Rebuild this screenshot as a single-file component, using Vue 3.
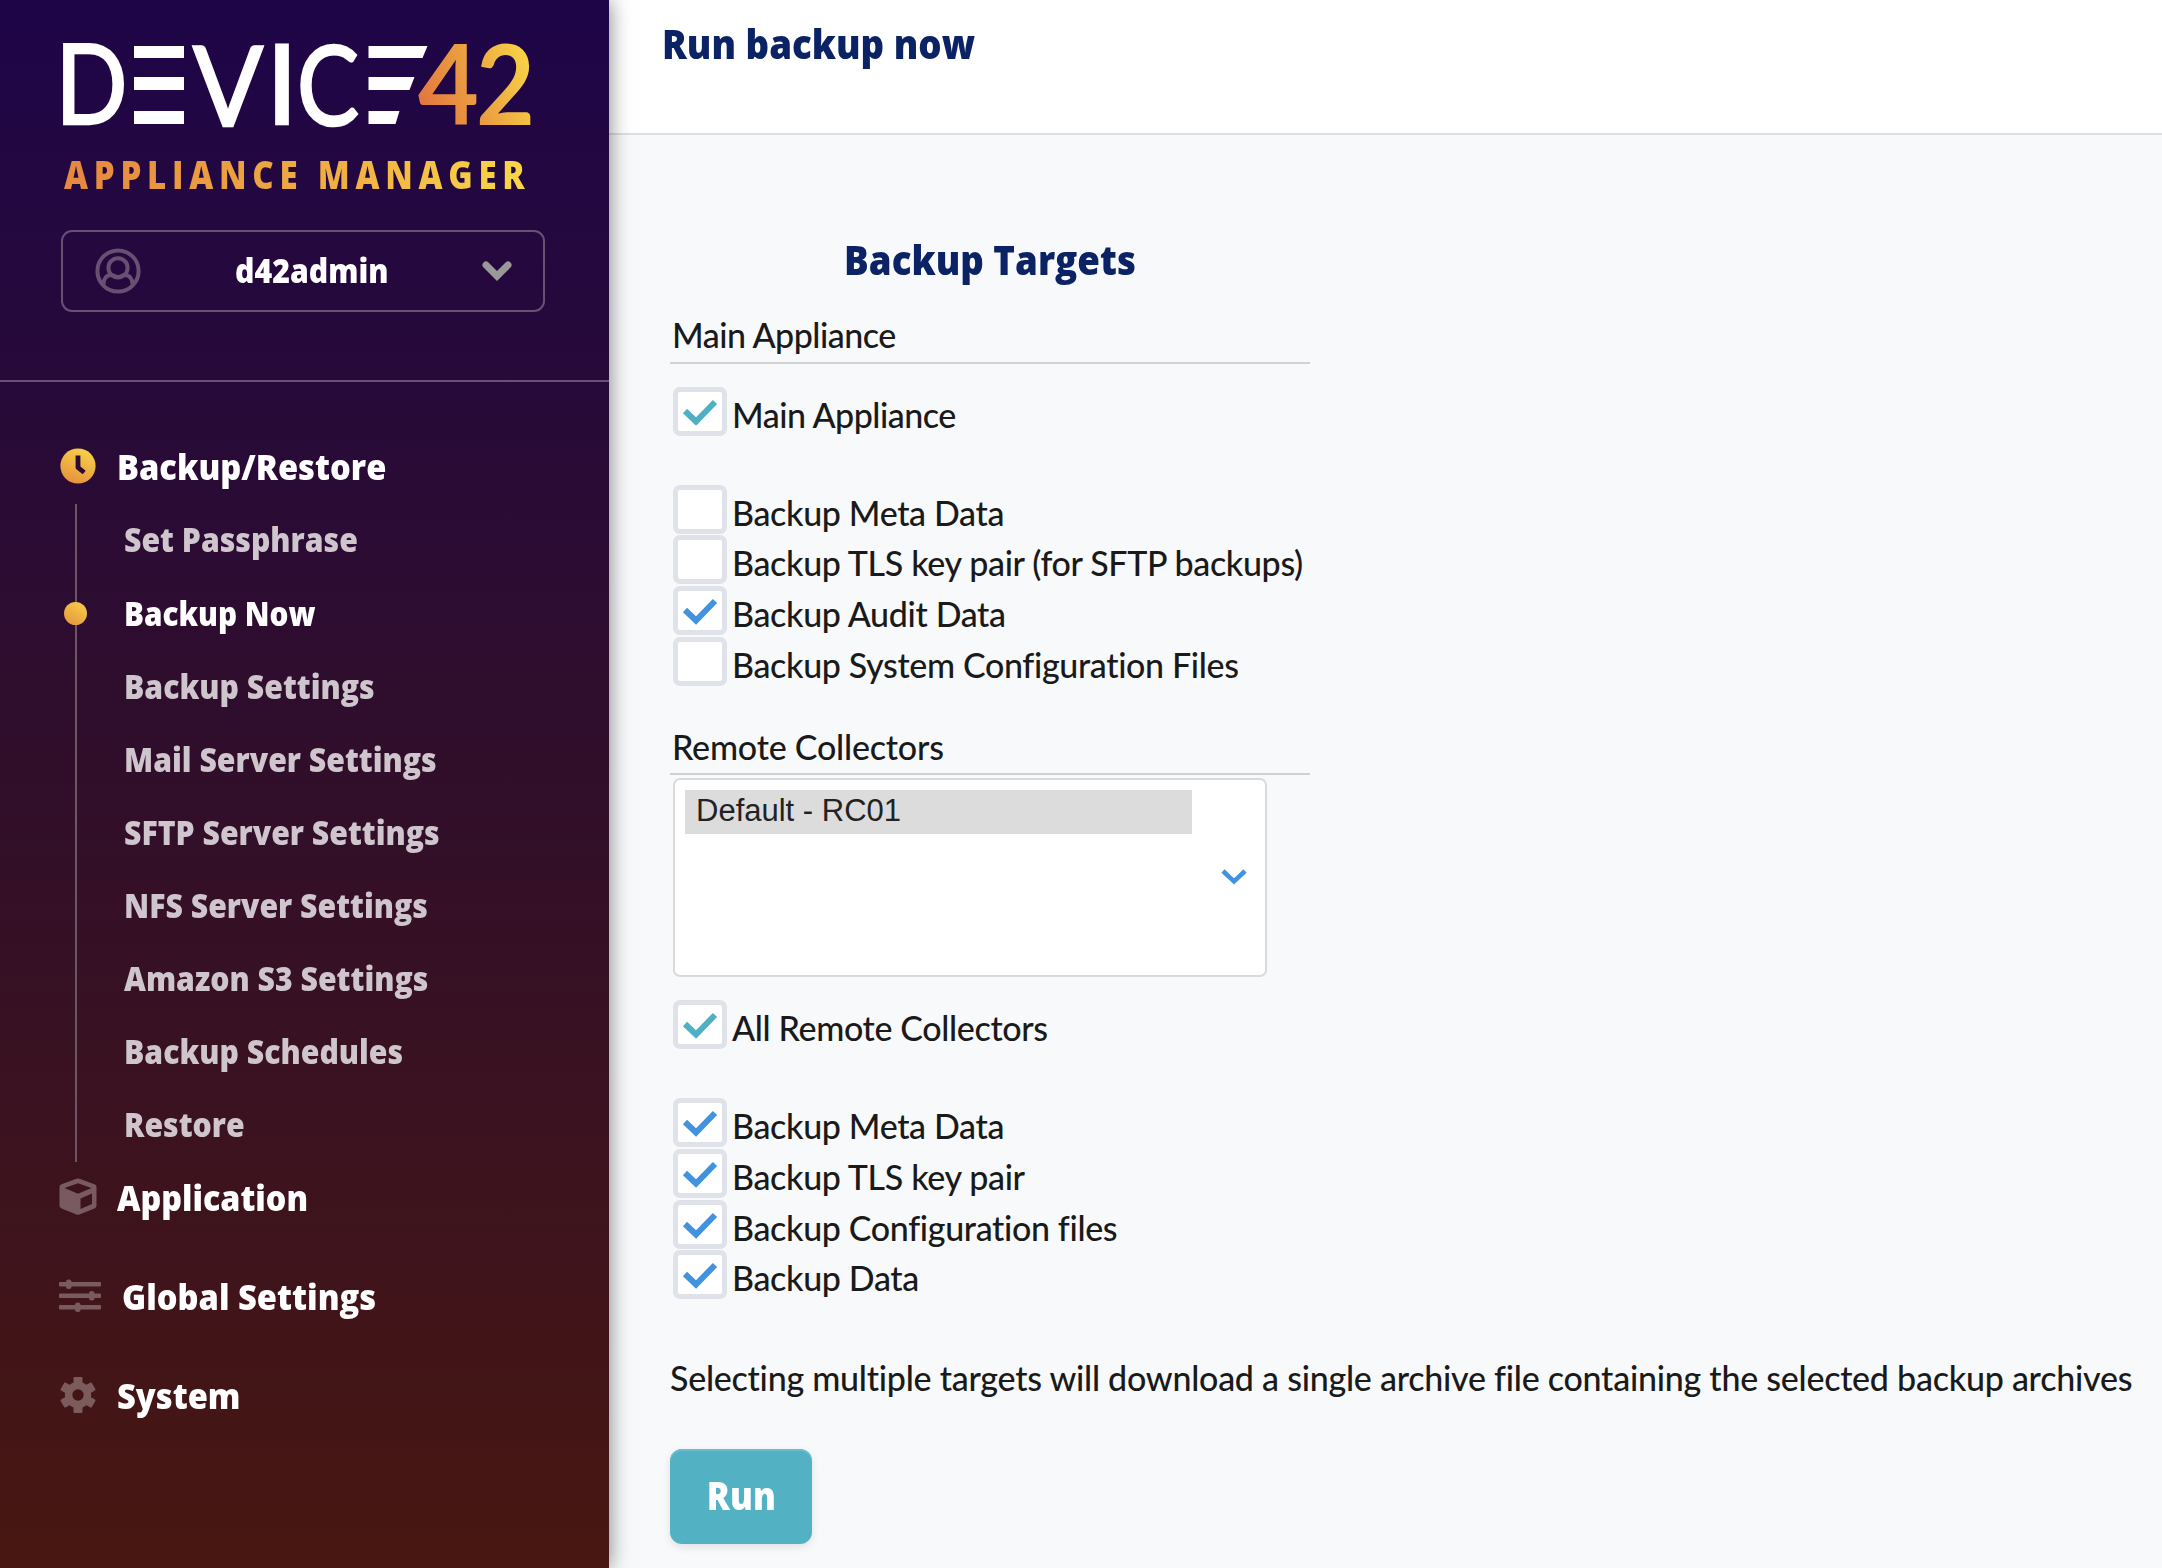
<script setup>
const backupItems = [
  { label: 'Set Passphrase' },
  { label: 'Backup Now', active: true },
  { label: 'Backup Settings' },
  { label: 'Mail Server Settings' },
  { label: 'SFTP Server Settings' },
  { label: 'NFS Server Settings' },
  { label: 'Amazon S3 Settings' },
  { label: 'Backup Schedules' },
  { label: 'Restore' },
]

const mainOptions = [
  { label: 'Backup Meta Data', checked: false },
  { label: 'Backup TLS key pair (for SFTP backups)', checked: false },
  { label: 'Backup Audit Data', checked: true },
  { label: 'Backup System Configuration Files', checked: false },
]

const collectorOptions = [
  { label: 'Backup Meta Data', checked: true },
  { label: 'Backup TLS key pair', checked: true },
  { label: 'Backup Configuration files', checked: true },
  { label: 'Backup Data', checked: true },
]
</script>

<template>
  <div class="page">
    <aside class="sidebar">
      <div class="brand">
        <svg class="logo" width="472" height="90" viewBox="0 0 472 90" aria-label="DEVICE42">
          <defs>
            <linearGradient id="gold" gradientUnits="userSpaceOnUse" x1="358" y1="70" x2="466" y2="30">
              <stop offset="0" stop-color="#e27541" />
              <stop offset="0.5" stop-color="#eb9f40" />
              <stop offset="1" stop-color="#f7d046" />
            </linearGradient>
          </defs>
          <g class="letters" fill="#fff" stroke="#fff">
            <text x="-7.500" y="84" textLength="72" lengthAdjust="spacingAndGlyphs">D</text>
            <text x="130" y="85.500" textLength="70" lengthAdjust="spacingAndGlyphs">V</text>
            <text x="203" y="84" textLength="32" lengthAdjust="spacingAndGlyphs">I</text>
            <text x="234" y="85" textLength="62" lengthAdjust="spacingAndGlyphs">C</text>
          </g>
          <g fill="#fff">
            <rect x="71" y="6" width="50" height="12" />
            <rect x="71" y="37" width="50" height="13" />
            <rect x="71" y="71" width="50" height="13" />
            <path d="M305.500 6h59l-5 12h-54z" />
            <path d="M305.500 37h46l-5 13h-41z" />
            <path d="M305.500 71h31l-4 13h-27z" />
          </g>
          <g class="letters bold" fill="url(#gold)">
            <text x="355" y="85" textLength="61" lengthAdjust="spacingAndGlyphs">4</text>
            <text x="413" y="85" textLength="59" lengthAdjust="spacingAndGlyphs">2</text>
          </g>
        </svg>
        <div class="product">APPLIANCE MANAGER</div>
      </div>

      <div class="user">
        <svg class="avatar" width="46" height="46" viewBox="0 0 46 46" fill="none" stroke="#685072" stroke-width="4">
          <circle cx="23" cy="23" r="20.6" />
          <circle cx="23" cy="19.8" r="9.6" />
          <path d="M8.5 36.5c0-6 3-9.500 8-9.500 2 0 3.500 2 6.500 2s4.500-2 6.500-2c5 0 8 3.500 8 9.500" />
        </svg>
        <div class="user-name"><span>d42admin</span></div>
        <svg class="caret" width="30" height="20" viewBox="0 0 30 20" fill="none" stroke="#999" stroke-width="7" stroke-linecap="round">
          <path d="M4 4l11 11L26 4" />
        </svg>
      </div>

      <nav class="nav">
        <div class="head">
          <svg class="icon" width="36" height="36" viewBox="0 0 36 36">
            <defs>
              <linearGradient id="sun" x1="0.3" y1="1" x2="0.7" y2="0">
                <stop offset="0" stop-color="#e5913f" />
                <stop offset="1" stop-color="#f8d247" />
              </linearGradient>
            </defs>
            <circle cx="18" cy="18" r="17.600" fill="url(#sun)" />
            <path d="M18 7.500v12l6.200 5" fill="none" stroke="#2b0a33" stroke-width="4.800" stroke-linejoin="round" />
          </svg>
          <span>Backup/Restore</span>
        </div>
        <ul class="sub">
          <li v-for="item in backupItems" :key="item.label" :class="{ active: item.active }"><span>{{ item.label }}</span></li>
        </ul>
        <div class="head app">
          <svg class="icon" width="38" height="37" viewBox="0 0 38 37" fill="#795a61" fill-rule="evenodd">
            <path d="M17.500 .8q1.500-.6 3 0l15 5.400q2 .8 2 2.800v18.500q0 2-2 3l-15 6q-1.500 .6-3 0l-15-6q-2-1-2-3V9q0-2 2-2.800zM5.500 10l13.500 5.800L32.500 10 19 5.200zM21.500 20.500v10.500l11.500-5v-10.500z" />
          </svg>
          <span>Application</span>
        </div>
        <div class="head wide">
          <svg class="icon" width="42" height="34" viewBox="0 0 42 34" fill="#795a5e">
            <rect x="0" y="3" width="42" height="4.500" rx="1" />
            <rect x="0" y="14.500" width="42" height="4.500" rx="1" />
            <rect x="0" y="26" width="42" height="4.500" rx="1" />
            <rect x="7" y="0.500" width="5.500" height="9.500" rx="2.500" />
            <rect x="30" y="12" width="5.500" height="9.500" rx="2.500" />
            <rect x="16" y="23.500" width="5.500" height="9.500" rx="2.500" />
          </svg>
          <span>Global Settings</span>
        </div>
        <div class="head">
          <svg class="icon" width="36" height="36" viewBox="0 0 36 36">
            <g fill="#7c5b5c">
              <rect x="13.500" y="0" width="9" height="36" rx="1" />
              <rect x="13.500" y="0" width="9" height="36" rx="1" transform="rotate(60 18 18)" />
              <rect x="13.500" y="0" width="9" height="36" rx="1" transform="rotate(120 18 18)" />
              <circle cx="18" cy="18" r="13.200" />
            </g>
            <circle cx="18" cy="18" r="5.700" fill="#441415" />
          </svg>
          <span>System</span>
        </div>
      </nav>
    </aside>

    <main class="content">
      <header class="topbar"><h1>Run backup now</h1></header>
      <section class="form">
        <h2>Backup Targets</h2>

        <h3>Main Appliance</h3>
        <label class="check lead teal">
          <span class="box"><svg width="54" height="49" viewBox="0 0 54 49"><path d="M12 24l11 10.500L42 15" /></svg></span>
          <span class="text">Main Appliance</span>
        </label>
        <div class="group">
          <label v-for="o in mainOptions" :key="o.label" class="check">
            <span class="box"><svg v-if="o.checked" width="54" height="49" viewBox="0 0 54 49"><path d="M12 24l11 10.500L42 15" /></svg></span>
            <span class="text">{{ o.label }}</span>
          </label>
        </div>

        <h3 class="second">Remote Collectors</h3>
        <div class="select">
          <div class="option">Default - RC01</div>
          <svg width="26" height="18" viewBox="0 0 26 18" fill="none" stroke="#4193e0" stroke-width="4.500"><path d="M2 2l11 10.500L24 2" /></svg>
        </div>
        <label class="check lead all teal">
          <span class="box"><svg width="54" height="49" viewBox="0 0 54 49"><path d="M12 24l11 10.500L42 15" /></svg></span>
          <span class="text">All Remote Collectors</span>
        </label>
        <div class="group">
          <label v-for="o in collectorOptions" :key="o.label" class="check">
            <span class="box"><svg v-if="o.checked" width="54" height="49" viewBox="0 0 54 49"><path d="M12 24l11 10.500L42 15" /></svg></span>
            <span class="text">{{ o.label }}</span>
          </label>
        </div>

        <p class="note">Selecting multiple targets will download a single archive file containing the selected backup archives</p>
        <button class="run"><span>Run</span></button>
      </section>
    </main>
  </div>
</template>

<style>
body { overflow: hidden; }
</style>

<style scoped>
* { box-sizing: border-box; }
.page { display: flex; width: 2162px; height: 1568px; background: #f8f9fb; overflow: hidden; font-family: "Lato", sans-serif; white-space: nowrap; }

.sidebar { position: relative; z-index: 1; flex: none; width: 609px; height: 1568px; background: linear-gradient(#1e0548, #300e2b 48%, #481711); box-shadow: 0 0 20px rgba(0, 0, 0, 0.5); font-family: "Open Sans", sans-serif; font-weight: 800; color: #fff; }
.brand { height: 230px; padding: 40px 0 0 63px; }
.logo { display: block; overflow: visible; }
.letters { font: 400 111px "Lato", sans-serif; stroke-width: 2.500; }
.letters.bold { font-weight: 700; }
.product { width: max-content; margin-top: 18px; margin-left: 1px; font-size: 38px; font-weight: 800; line-height: 52px; letter-spacing: 6.600px; transform: scaleX(0.87); transform-origin: 0 50%; background: linear-gradient(90deg, #e58740, #f0b043 60%, #f9d847); background-clip: text; -webkit-background-clip: text; color: transparent; }

.user { display: flex; align-items: center; width: 484px; height: 82px; margin-left: 61px; padding: 0 31px 0 32px; border: 2px solid #685072; border-radius: 11px; }
.user-name { flex: 1; margin-top: -2px; padding-left: 94px; font-size: 34px; }
.user-name span { display: inline-block; transform: scaleX(0.89); transform-origin: 0 50%; }
.avatar, .caret { flex: none; }

.nav { margin-top: 68px; padding-top: 49px; border-top: 2px solid #685370; }
.head { display: flex; align-items: center; height: 70px; margin-bottom: 29px; padding-left: 60px; font-size: 35.500px; }
.head span { margin-left: 21px; transform: scaleX(0.92); transform-origin: 0 50%; }
.head.app, .head.wide { padding-left: 59px; }
.head.app span { margin-left: 20px; transform: scaleX(0.91); }
.head .icon { flex: none; }
.head:first-child { margin-bottom: 3px; }
.sub { margin: 0 0 0 75px; padding: 0; list-style: none; border-left: 2px solid #6d5566; }
.sub li { position: relative; height: 73.100px; padding-left: 46.500px; font-size: 33px; line-height: 72px; color: #cfc5cd; }
.sub li:nth-child(n + 2):nth-child(-n + 6) { line-height: 73px; }
.sub li span { display: inline-block; transform: scaleX(0.915); transform-origin: 0 50%; }
.sub li.active { color: #fff; }
.sub li.active span { transform: scaleX(0.9); }
.sub li.active::before { content: ""; position: absolute; left: -13px; top: 25px; width: 23px; height: 23px; border-radius: 50%; background: linear-gradient(30deg, #e5913f, #f8d247); }

.content { flex: 1; }
.topbar { height: 135px; padding: 15px 0 0 53px; background: #fff; border-bottom: 2px solid #dcdfe6; }
h1, h2 { margin: 0; font: 800 41px/57px "Open Sans", sans-serif; color: #0b2265; transform: scaleX(0.895); }
h1 { transform-origin: 0 50%; }
.form { width: 640px; margin-left: 61px; padding-top: 96px; color: #1a1a1a; }
h2 { text-align: center; }
h3 { margin: 0; height: 76px; padding: 25px 0 0 2px; border-bottom: 2px solid #cfd1d3; font-size: 34px; font-weight: 500; line-height: 44px; letter-spacing: -0.500px; }
.check { display: flex; height: 50.700px; margin-left: 3px; font-size: 34px; font-weight: 500; }
.check.lead { margin-top: 23px; }
.lead .text { letter-spacing: -0.500px; }
.box { flex: none; width: 54px; height: 49px; border: 5px solid #dfe2e8; border-radius: 7px; background: #fff; }
.box svg { display: block; margin: -5px; fill: none; stroke: #4193e0; stroke-width: 6; }
.teal .box svg { stroke: #50b0c3; }
.text { margin-left: 5px; line-height: 56px; letter-spacing: -0.350px; }
.group { margin-top: 47px; }
h3.second { height: 88px; padding-top: 38px; letter-spacing: -0.200px; }
.select { display: flex; align-items: center; justify-content: space-between; width: 594px; height: 199px; margin: 3px 0 0 3px; padding: 10px 18px 10px 10px; border: 2px solid #d9dadb; border-radius: 7px; background: #fff; }
.option { align-self: flex-start; width: 507px; height: 44px; padding-left: 11px; background: #dcdcdc; font: 31px/41px "Liberation Sans", sans-serif; color: #222; }
.check.all { margin-top: 23px; }
.check.all .text { letter-spacing: -0.350px; }
.note { margin: 49px 0 0; font-size: 34px; font-weight: 500; line-height: 56px; letter-spacing: -0.250px; }
.run { display: block; width: 142px; height: 95px; margin-top: 43px; padding: 0 0 3px; border: 0; border-radius: 12px; background: #53b1c4; box-shadow: inset 0 2px 0 #69bfcf, 0 3px 8px rgba(0, 0, 0, 0.1); font: 800 38px "Open Sans", sans-serif; color: #fff; }
.run span { display: inline-block; transform: scaleX(0.9); }
</style>
